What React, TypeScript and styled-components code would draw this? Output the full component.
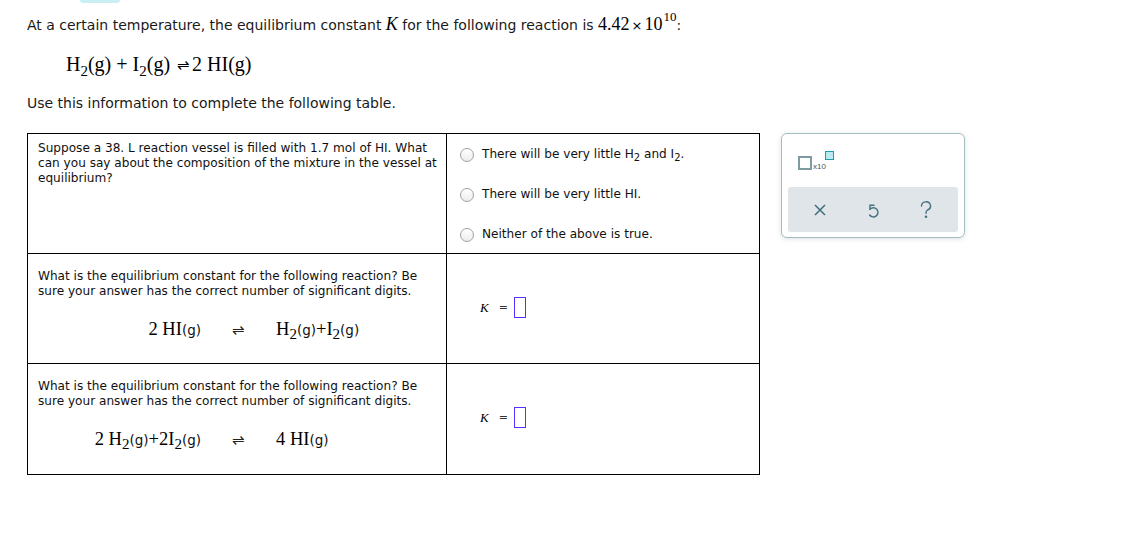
import React from "react";
import styled, { createGlobalStyle } from "styled-components";

// Style

const GlobalStyle = createGlobalStyle`
  body {
    margin: 0;
    background: #ffffff;
    color: #000000;
    font-family: "DejaVu Sans", Verdana, sans-serif;
  }
`;

const Page = styled.div`
  width: 1147px;
  height: 554px;
  padding-left: 27px;
  box-sizing: border-box;
  overflow: hidden;
`;

const TopTab = styled.div`
  width: 40px;
  height: 3px;
  margin-left: 53px;
  background: #c9eff5;
  border-bottom-left-radius: 8px;
  border-bottom-right-radius: 8px;
`;

const Intro = styled.p`
  margin: 11px 0 0 0;
  font-size: 14px;
  line-height: 20px;
  color: #1a1a1a;
`;

const MathSerif = styled.span<{ $size?: number; $italic?: boolean }>`
  font-family: "Liberation Serif", "Times New Roman", serif;
  font-size: ${(p) => p.$size ?? 18.5}px;
  font-style: ${(p) => (p.$italic ? "italic" : "normal")};
  color: #000;
`;

const Sup = styled.sup`
  font-size: 13px;
  position: relative;
  top: -9px;
  vertical-align: baseline;
  margin-left: 1px;
`;

const Times = styled.span`
  font-family: "DejaVu Sans", Verdana, sans-serif;
  font-size: 13px;
  margin: 0 2px;
`;

const Sub = styled.sub<{ $size?: number; $drop?: number }>`
  font-size: ${(p) => p.$size ?? 15}px;
  vertical-align: baseline;
  position: relative;
  top: ${(p) => p.$drop ?? 5}px;
`;

const Reaction = styled.div`
  margin: 15px 0 0 39px;
  height: 26px;
  line-height: 26px;
  font-family: "Liberation Serif", "Times New Roman", serif;
  font-size: 20px;
`;

const Arrow = styled.span`
  font-size: 15px;
  margin: 0 2px;
  position: relative;
  top: -1px;
`;

const Note = styled.p`
  margin: 16px 0 0 0;
  font-size: 14px;
  line-height: 20px;
  color: #1a1a1a;
`;

const Body = styled.div`
  display: flex;
  align-items: flex-start;
  gap: 21px;
  margin-top: 20px;
`;

const Table = styled.table`
  border-collapse: collapse;
  width: 733px;
  font-family: "DejaVu Sans", Verdana, sans-serif;
  font-size: 12.1px;
  line-height: 15px;
  color: #111;
`;

const Row = styled.tr<{ $h: number }>`
  height: ${(p) => p.$h}px;
`;

const QCell = styled.td<{ $pt: number }>`
  width: 419px;
  border: 1px solid #000;
  vertical-align: top;
  padding: ${(p) => p.$pt}px 5px 0 10px;
  box-sizing: border-box;
`;

const ACell = styled.td<{ $pt: number }>`
  border: 1px solid #000;
  vertical-align: top;
  padding: ${(p) => p.$pt}px 0 0 13px;
  box-sizing: border-box;
`;

const Options = styled.div`
  display: flex;
  flex-direction: column;
  gap: 27px;
`;

const Option = styled.label`
  display: flex;
  align-items: center;
  gap: 8px;
  height: 13px;
`;

const Radio = styled.span`
  width: 12px;
  height: 12px;
  border-radius: 50%;
  border: 1px solid #a0a0a0;
  background: linear-gradient(#ffffff, #ececec);
  flex: none;
`;

const SmallSub = styled.sub`
  font-size: 10px;
  vertical-align: baseline;
  position: relative;
  top: 3px;
`;

const Equation = styled.div`
  display: grid;
  grid-template-columns: 163px 75px auto;
  align-items: center;
  margin-top: 18px;
  height: 26px;
`;

const Left = styled.div`
  text-align: right;
  white-space: nowrap;
`;

const Mid = styled.div`
  text-align: center;
  font-family: "Liberation Serif", serif;
  font-size: 15px;
  color: #222;
`;

const Phase = styled.span`
  font-family: "DejaVu Sans", Verdana, sans-serif;
  font-size: 13.5px;
`;

const Answer = styled.div`
  display: flex;
  align-items: center;
  margin-left: 20px;
  height: 20px;
`;

const Equals = styled.span`
  font-size: 11px;
  margin: 0 6px 0 10px;
  color: #333;
`;

const AnswerBox = styled.span`
  width: 10px;
  height: 19px;
  border: 1px solid #5533ff;
  background: #fff;
`;

const Widget = styled.div`
  width: 184px;
  height: 105px;
  box-sizing: border-box;
  border: 1px solid #a9bcc2;
  border-radius: 6px;
  box-shadow: 0 1px 5px rgba(60, 90, 100, 0.18);
  background: #fff;
  display: flex;
  flex-direction: column;
  padding: 0 6px 5px 6px;
`;

const Entry = styled.div`
  flex: 1;
  display: flex;
  align-items: flex-start;
  padding: 17px 0 0 10px;
`;

const Base = styled.span`
  width: 10px;
  height: 10px;
  border: 2px solid #7e9ba2;
  margin-top: 5px;
  background: #fff;
`;

const TenLabel = styled.span`
  font-size: 8px;
  color: #4a5a5e;
  margin-top: 11px;
  margin-left: 1px;
  font-family: "Liberation Sans", Arial, sans-serif;
`;

const Exp = styled.span`
  width: 7px;
  height: 7px;
  border: 1.5px solid #1e9cb2;
  background: #bdeaf2;
  margin-left: -1px;
`;

const Toolbar = styled.div`
  height: 45px;
  background: #dfe5e8;
  border-radius: 3px;
  display: flex;
  align-items: center;
  justify-content: space-around;
  padding: 0 6px;
`;

const ToolButton = styled.button`
  border: none;
  background: transparent;
  padding: 0;
  width: 24px;
  height: 24px;
  display: flex;
  align-items: center;
  justify-content: center;
  color: #46707e;
`;

// render

const XIcon = () => (
  <svg width="14" height="14" viewBox="0 0 14 14" fill="none" stroke="currentColor" strokeWidth="1.6">
    <path d="M2 2 L12 12 M12 2 L2 12" />
  </svg>
);

const UndoIcon = () => (
  <svg width="14" height="16" viewBox="0 0 14 16" fill="none" stroke="currentColor" strokeWidth="1.4" strokeLinecap="round">
    <path d="M4 7.2 A4.6 4.6 0 1 1 3.6 13" />
    <path d="M4 7.2 L4 3.2 L8 3.2" />
  </svg>
);

const HelpIcon = () => (
  <svg width="12" height="18" viewBox="0 0 12 18" fill="none" stroke="currentColor" strokeWidth="1.4" strokeLinecap="round">
    <path d="M1.5 5 A4.5 4.2 0 1 1 7.5 9 C6.2 9.8 6 10.6 6 12.3" />
    <circle cx="6" cy="15.8" r="0.6" fill="currentColor" />
  </svg>
);

const H2 = () => (
  <MathSerif>
    H<Sub $size={15} $drop={4}>2</Sub>
  </MathSerif>
);

const I2 = () => (
  <MathSerif>
    I<Sub $size={15} $drop={4}>2</Sub>
  </MathSerif>
);

const KAnswer = () => (
  <Answer>
    <MathSerif $size={13} $italic>
      K
    </MathSerif>
    <Equals>=</Equals>
    <AnswerBox />
  </Answer>
);

export default function App() {
  return (
    <Page>
      <GlobalStyle />
      <TopTab />
      <Intro>
        At a certain temperature, the equilibrium constant{" "}
        <MathSerif $size={18} $italic>
          K
        </MathSerif>{" "}
        for the following reaction is{" "}
        <MathSerif $size={18}>
          4.42<Times>×</Times>10<Sup>10</Sup>
        </MathSerif>
        :
      </Intro>
      <Reaction>
        H<Sub>2</Sub>(g) + I<Sub>2</Sub>(g) <Arrow>⇌</Arrow>2 HI(g)
      </Reaction>
      <Note>Use this information to complete the following table.</Note>
      <Body>
        <Table>
          <tbody>
            <Row $h={120}>
              <QCell $pt={7}>
                Suppose a 38. L reaction vessel is filled with 1.7 mol of HI. What can you say about the
                composition of the mixture in the vessel at equilibrium?
              </QCell>
              <ACell $pt={14}>
                <Options>
                  <Option>
                    <Radio />
                    <span>
                      There will be very little H<SmallSub>2</SmallSub> and I<SmallSub>2</SmallSub>.
                    </span>
                  </Option>
                  <Option>
                    <Radio />
                    <span>There will be very little HI.</span>
                  </Option>
                  <Option>
                    <Radio />
                    <span>Neither of the above is true.</span>
                  </Option>
                </Options>
              </ACell>
            </Row>
            <Row $h={110}>
              <QCell $pt={15}>
                What is the equilibrium constant for the following reaction? Be sure your answer has the
                correct number of significant digits.
                <Equation>
                  <Left>
                    <MathSerif>2 HI</MathSerif>
                    <Phase>(g)</Phase>
                  </Left>
                  <Mid>⇌</Mid>
                  <div>
                    <H2 />
                    <Phase>(g)</Phase>
                    <MathSerif>+</MathSerif>
                    <I2 />
                    <Phase>(g)</Phase>
                  </div>
                </Equation>
              </QCell>
              <ACell $pt={43}>
                <KAnswer />
              </ACell>
            </Row>
            <Row $h={111}>
              <QCell $pt={15}>
                What is the equilibrium constant for the following reaction? Be sure your answer has the
                correct number of significant digits.
                <Equation>
                  <Left>
                    <MathSerif>2 </MathSerif>
                    <H2 />
                    <Phase>(g)</Phase>
                    <MathSerif>+2</MathSerif>
                    <I2 />
                    <Phase>(g)</Phase>
                  </Left>
                  <Mid>⇌</Mid>
                  <div>
                    <MathSerif>4 HI</MathSerif>
                    <Phase>(g)</Phase>
                  </div>
                </Equation>
              </QCell>
              <ACell $pt={43}>
                <KAnswer />
              </ACell>
            </Row>
          </tbody>
        </Table>
        <Widget>
          <Entry>
            <Base />
            <TenLabel>x10</TenLabel>
            <Exp />
          </Entry>
          <Toolbar>
            <ToolButton>
              <XIcon />
            </ToolButton>
            <ToolButton>
              <UndoIcon />
            </ToolButton>
            <ToolButton>
              <HelpIcon />
            </ToolButton>
          </Toolbar>
        </Widget>
      </Body>
    </Page>
  );
}
